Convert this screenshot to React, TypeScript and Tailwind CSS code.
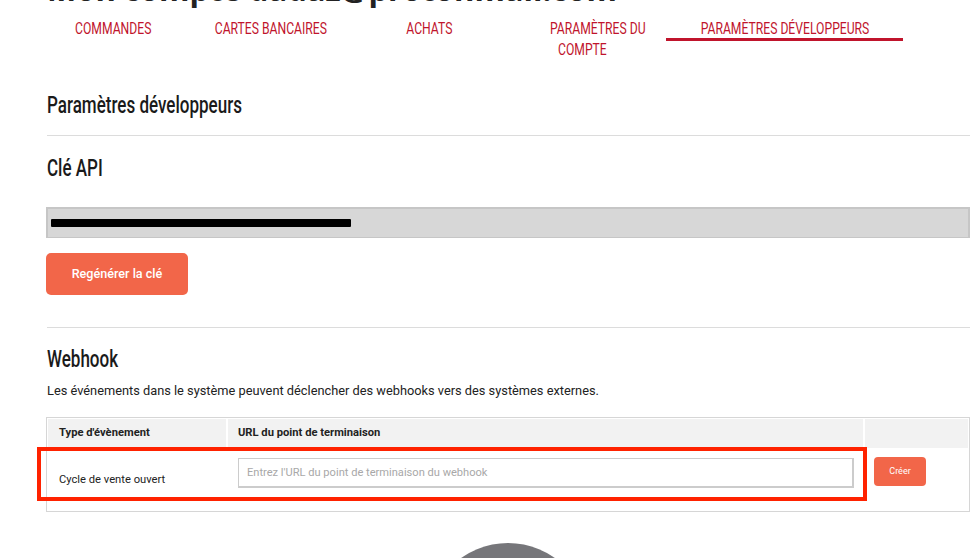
import React from "react";

const cond = { fontFamily: "Roboto, 'Liberation Sans', sans-serif" };

function Tab({ children }: { children: React.ReactNode }) {
  return <span className="inline-block scale-x-[0.76] origin-center whitespace-nowrap">{children}</span>;
}

function Heading({ children }: { children: React.ReactNode }) {
  return <span className="inline-block scale-x-[0.74] origin-left whitespace-nowrap font-medium">{children}</span>;
}

export default function App() {
  return (
    <div className="relative w-[970px] h-[558px] overflow-hidden bg-white" style={{ fontFamily: "Roboto, 'Liberation Sans', sans-serif" }}>
      <div className="ml-[47px] -mt-[26px] h-[30px] text-[31px] font-bold leading-[30px] text-[#222] whitespace-nowrap" style={{ fontFamily: "'Open Sans', 'Liberation Sans', sans-serif" }}>
        Mon compte dadaz@protonmail.com
      </div>

      <nav className="ml-[34px] mt-[2px] flex text-[#c0142c] text-[16px] leading-[21px] uppercase" style={cond}>
        <div className="w-[158px] pt-[12px] text-center"><Tab>COMMANDES</Tab></div>
        <div className="w-[158px] pt-[12px] text-center"><Tab>CARTES BANCAIRES</Tab></div>
        <div className="w-[158px] pt-[12px] text-center"><Tab>ACHATS</Tab></div>
        <div className="w-[158px] pt-[12px] pl-[42px]">
          <div><span className="inline-block scale-x-[0.76] origin-left whitespace-nowrap">PARAMÈTRES DU</span></div>
          <div className="pl-[8px]"><span className="inline-block scale-x-[0.76] origin-left whitespace-nowrap">COMPTE</span></div>
        </div>
        <div className="w-[237px] pt-[12px]">
          <div className="text-center h-[23px] border-b-[3px] border-[#c0142c]"><Tab>PARAMÈTRES DÉVELOPPEURS</Tab></div>
        </div>
      </nav>

      <div className="ml-[47px] w-[923px] mt-[31px]">
        <h1 className="text-[23px] leading-[30px] text-[#1a1a1a] pb-[14px] border-b border-[#dcdcdc]"><Heading>Paramètres développeurs</Heading></h1>
        <h2 className="text-[23px] leading-[30px] text-[#1a1a1a] mt-[18px]"><Heading>Clé API</Heading></h2>
        <div className="mt-[23px] -ml-[1px] h-[31px] bg-[#d7d7d7] border-2 border-[#c6c6c6] border-b-[1px] flex items-center pl-[3px]">
          <div className="w-[300px] h-[8px] bg-black rounded-[1px]"></div>
        </div>
        <button className="mt-[15px] -ml-[1px] w-[142px] h-[42px] rounded-[5px] bg-[#f26649] text-white text-[12.6px] font-medium">Regénérer la clé</button>
        <div className="mt-[32px] border-t border-[#dcdcdc]"></div>
        <h2 className="text-[23px] leading-[30px] text-[#1a1a1a] mt-[17px]"><Heading>Webhook</Heading></h2>
        <p className="text-[12.8px] leading-[18px] text-[#222] mt-[7px]">Les événements dans le système peuvent déclencher des webhooks vers des systèmes externes.</p>

        <div className="mt-[17px] -ml-[1px] h-[95px] border border-[#d6d6d6] p-[1px]">
          <div className="flex gap-[2px] h-[29px] text-[11.2px] font-bold text-[#222]">
            <div className="w-[178px] bg-[#f2f2f2] pl-[11px] flex items-center">Type d'évènement</div>
            <div className="w-[635px] bg-[#f2f2f2] pl-[10px] flex items-center">URL du point de terminaison</div>
            <div className="flex-1 bg-[#f2f2f2]"></div>
          </div>
          <div className="flex gap-[2px] h-[58px] text-[11.2px] text-[#222]">
            <div className="w-[178px] pl-[11px] pt-[24px]">Cycle de vente ouvert</div>
            <div className="w-[635px] pl-[10px] pt-[10px]">
              <input
                className="w-[616px] h-[30px] border-2 border-[#cccccc] border-t-[1px] border-l-[1px] px-[8px] text-[11.1px] text-[#333] placeholder:text-[#a8a8a8] outline-none"
                placeholder="Entrez l'URL du point de terminaison du webhook"
              />
            </div>
            <div className="flex-1 pl-[9px] pt-[9px]">
              <button className="w-[52px] h-[29px] rounded-[4px] bg-[#f26649] text-white text-[9px]">Créer</button>
            </div>
          </div>
        </div>
      </div>

      <div className="absolute left-[37px] top-[447px] w-[830px] h-[54px] border-[4px] border-[#ff2200] pointer-events-none"></div>

      <div className="absolute left-[427px] top-[543px] w-[162px] h-[162px] rounded-full bg-[#76767a]"></div>
    </div>
  );
}
